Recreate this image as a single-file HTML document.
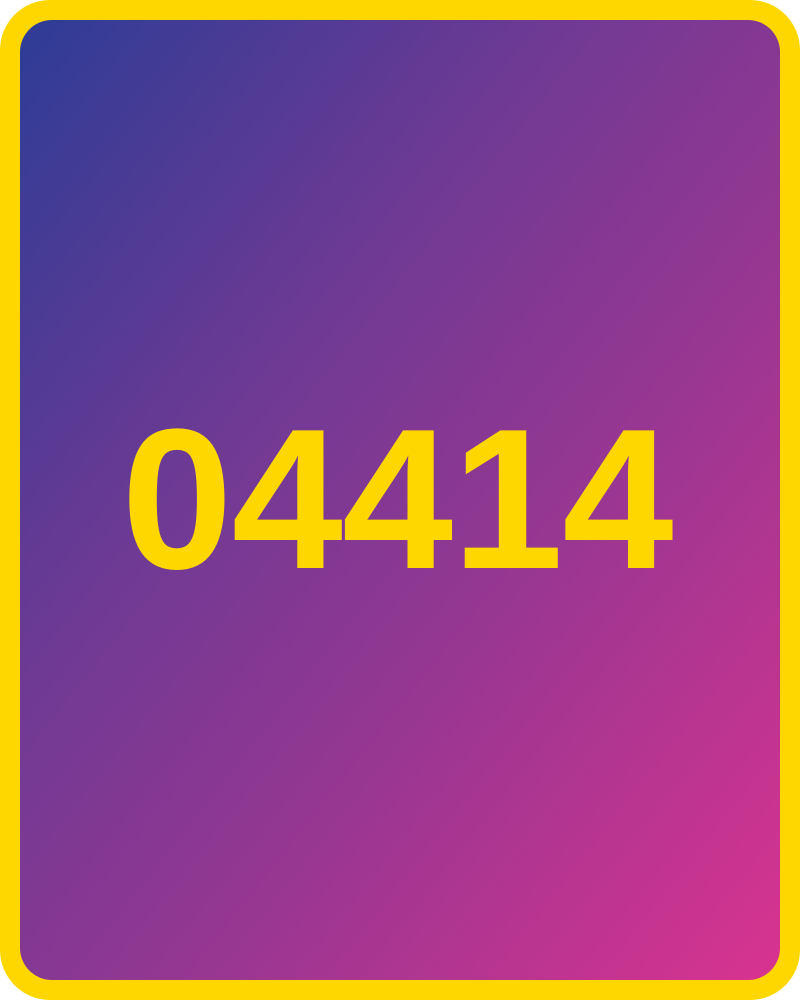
<!DOCTYPE html>
<html><head><style>
html,body{margin:0;padding:0;width:800px;height:1000px;overflow:hidden;background:#fff;}
.card{position:absolute;left:0;top:0;width:800px;height:1000px;box-sizing:border-box;border-radius:50px;background:#ffd700;}
.inner{position:absolute;left:20px;top:20px;width:760px;height:960px;border-radius:32px;background:linear-gradient(to bottom right,#2d3c96 0%,#6e3a94 35%,#943792 60%,#d8338f 100%);}
.num{position:absolute;left:-3px;width:800px;top:385px;text-align:center;font-family:Arial,"Liberation Sans",Helvetica,sans-serif;font-weight:700;font-size:200px;line-height:230px;color:#ffd700;letter-spacing:-1px;}
</style></head><body>
<div class="card"><div class="inner"></div></div>
<div class="num">04414</div>
</body></html>
